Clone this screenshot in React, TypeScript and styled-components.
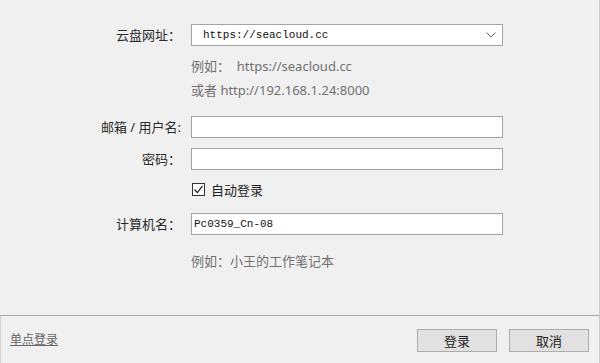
import React from "react";
import styled, { createGlobalStyle } from "styled-components";

const Global = createGlobalStyle`
  html, body { margin: 0; padding: 0; background: #f0f0f0; }
  * { box-sizing: border-box; }
`;

const Window = styled.div`
  width: 600px;
  height: 363px;
  background: #f0f0f0;
  border-right: 1px solid #d2cbc3;
  display: flex;
  flex-direction: column;
  font-family: "Noto Sans", "Noto Sans CJK SC", sans-serif;
  font-size: 13px;
  color: #2b2b2b;
  overflow: hidden;
`;

const Form = styled.div`
  height: 316px;
  padding-top: 24px;
  border-bottom: 1px solid #a8a8a8;
  display: flex;
  flex-direction: column;
`;

const Row = styled.div<{ $mt?: number; $h?: number }>`
  display: flex;
  align-items: center;
  margin-top: ${(p) => p.$mt ?? 0}px;
  height: ${(p) => p.$h ?? 22}px;
`;

const Label = styled.div`
  width: 181px;
  margin-right: 10px;
  flex-shrink: 0;
  text-align: right;
  white-space: nowrap;
  line-height: 22px;
`;

const Field = styled.div`
  width: 312px;
  height: 22px;
  background: #fff;
  border: 1px solid #a3a3a3;
  display: flex;
  align-items: center;
`;

const MonoText = styled.span<{ $pl: number }>`
  flex: 1;
  padding-left: ${(p) => p.$pl}px;
  font-family: "Liberation Mono", "DejaVu Sans Mono", monospace;
  font-size: 11px;
  color: #111;
  white-space: nowrap;
`;

const Chevron = styled.span`
  width: 22px;
  display: flex;
  justify-content: center;
  align-items: center;
  color: #707070;
`;

const Hint = styled.div<{ $mt?: number }>`
  margin-top: ${(p) => p.$mt ?? 0}px;
  padding-left: 191px;
  height: 24px;
  line-height: 24px;
  color: #707070;
  white-space: nowrap;
`;

const Check = styled.span`
  width: 13px;
  height: 13px;
  border: 1px solid #333;
  background: #fff;
  display: inline-flex;
  align-items: center;
  justify-content: center;
  margin-left: 192px;
  margin-right: 6px;
`;

const CheckLabel = styled.span`
  color: #222;
`;

const Footer = styled.div`
  flex: 1;
  display: flex;
  align-items: flex-start;
  padding: 13px 10px 0 10px;
  border-left: 1px solid #d8d2ca;
`;

const Link = styled.a`
  font-size: 12px;
  color: #666;
  text-decoration: underline;
  line-height: 22px;
  margin-left: -1px;
  cursor: pointer;
`;

const Spacer = styled.div`
  flex: 1;
`;

const Button = styled.button<{ $ml?: number }>`
  width: 80px;
  height: 23px;
  margin-left: ${(p) => p.$ml ?? 0}px;
  background: #e1e1e1;
  border: 1px solid #adadad;
  font-family: "Noto Sans CJK SC", sans-serif;
  font-size: 13px;
  color: #222;
  padding: 0;
  line-height: 20px;
`;

export default function App() {
  return (
    <>
      <Global />
      <Window>
        <Form>
          <Row>
            <Label>云盘网址：</Label>
            <Field>
              <MonoText $pl={11}>https://seacloud.cc</MonoText>
              <Chevron>
                <svg width="10" height="6" viewBox="0 0 10 6">
                  <path d="M0.5 0.5 L5 5 L9.5 0.5" fill="none" stroke="#6a6a6a" strokeWidth="1" />
                </svg>
              </Chevron>
            </Field>
          </Row>
          <Hint $mt={8}>例如：&nbsp;&nbsp;https://seacloud.cc</Hint>
          <Hint>或者 http://192.168.1.24:8000</Hint>
          <Row $mt={14}>
            <Label>邮箱 / 用户名:</Label>
            <Field />
          </Row>
          <Row $mt={10}>
            <Label>密码：</Label>
            <Field />
          </Row>
          <Row $mt={9} $h={20}>
            <Check>
              <svg width="11" height="11" viewBox="0 0 11 11">
                <path d="M1.5 5.5 L4.3 8.5 L9.5 1.8" fill="none" stroke="#222" strokeWidth="1.2" />
              </svg>
            </Check>
            <CheckLabel>自动登录</CheckLabel>
          </Row>
          <Row $mt={14}>
            <Label>计算机名：</Label>
            <Field>
              <MonoText $pl={2}>Pc0359_Cn-08</MonoText>
            </Field>
          </Row>
          <Hint $mt={14}>例如：小王的工作笔记本</Hint>
        </Form>
        <Footer>
          <Link>单点登录</Link>
          <Spacer />
          <Button>登录</Button>
          <Button $ml={12}>取消</Button>
        </Footer>
      </Window>
    </>
  );
}
